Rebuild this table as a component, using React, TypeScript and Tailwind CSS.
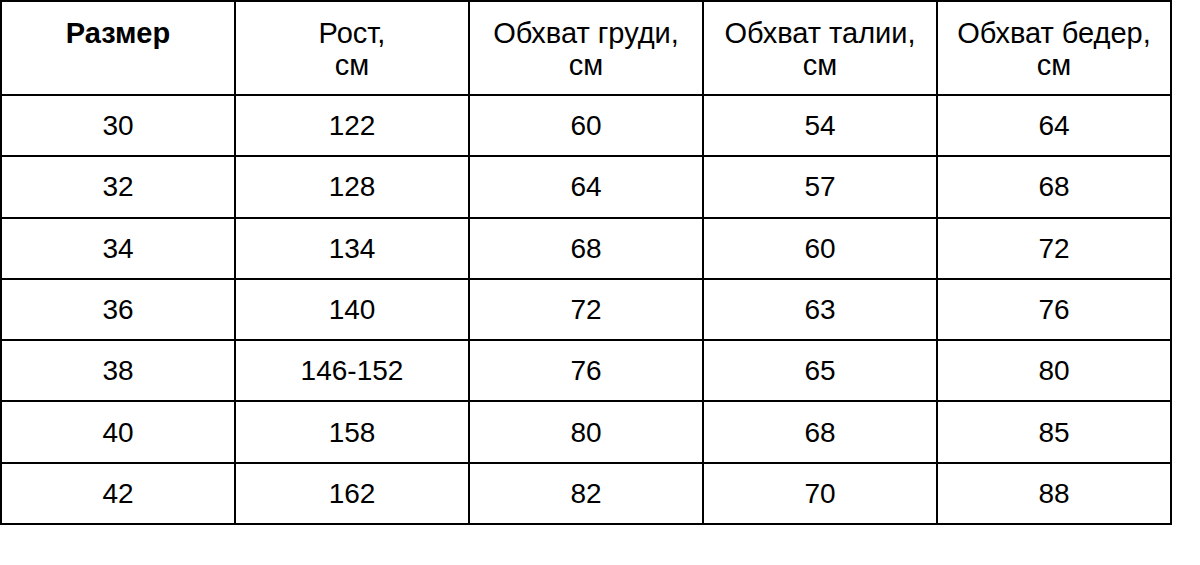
const header = ["Рост,\nсм", "Обхват груди,\nсм", "Обхват талии,\nсм", "Обхват бедер,\nсм"];

const rows = [
  ["30", "122", "60", "54", "64"],
  ["32", "128", "64", "57", "68"],
  ["34", "134", "68", "60", "72"],
  ["36", "140", "72", "63", "76"],
  ["38", "146-152", "76", "65", "80"],
  ["40", "158", "80", "68", "85"],
  ["42", "162", "82", "70", "88"],
];

export default function App() {
  return (
    <div className="w-[1200px] h-[565px] bg-white font-['Liberation_Sans',Arial,sans-serif] text-black">
      <table className="w-[1172px] table-fixed border-collapse border-2 border-black text-[28px] leading-[31px]">
        <thead>
          <tr className="h-[94px]">
            <th className="border-2 border-black align-top pt-[15px] font-bold text-[29px] leading-[32px]">Размер</th>
            {header.map((h) => (
              <th
                key={h}
                className="border-2 border-black align-top pt-[15px] font-normal text-[29px] leading-[32px] whitespace-pre-line"
              >
                {h}
              </th>
            ))}
          </tr>
        </thead>
        <tbody>
          {rows.map((r) => (
            <tr key={r[0]} className="h-[61.3px]">
              {r.map((c, i) => (
                <td key={i} className="border-2 border-black text-center align-middle p-0">
                  {c}
                </td>
              ))}
            </tr>
          ))}
        </tbody>
      </table>
    </div>
  );
}
